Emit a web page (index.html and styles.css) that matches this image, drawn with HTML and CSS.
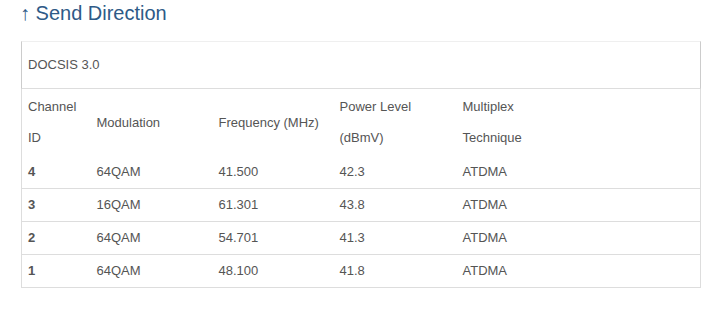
FILE: index.html
```html
<!DOCTYPE html>
<html lang="en">
<head>
<meta charset="utf-8">
<title>Send Direction</title>
<link rel="stylesheet" href="styles.css">
</head>
<body>
<div class="page">
  <h2 class="title"><span class="arrow">↑</span> Send Direction</h2>
  <div class="panel">
    <div class="panel-heading">DOCSIS 3.0</div>
    <table class="grid">
      <colgroup>
        <col class="c1"><col class="c2"><col class="c3"><col class="c4"><col>
      </colgroup>
      <thead>
        <tr>
          <th>Channel ID</th>
          <th>Modulation</th>
          <th>Frequency (MHz)</th>
          <th>Power Level (dBmV)</th>
          <th>Multiplex<br>Technique</th>
        </tr>
      </thead>
      <tbody>
        <tr><td class="id">4</td><td>64QAM</td><td>41.500</td><td>42.3</td><td>ATDMA</td></tr>
        <tr><td class="id">3</td><td>16QAM</td><td>61.301</td><td>43.8</td><td>ATDMA</td></tr>
        <tr><td class="id">2</td><td>64QAM</td><td>54.701</td><td>41.3</td><td>ATDMA</td></tr>
        <tr><td class="id">1</td><td>64QAM</td><td>48.100</td><td>41.8</td><td>ATDMA</td></tr>
      </tbody>
    </table>
  </div>
</div>
</body>
</html>
```
FILE: styles.css
```css
html, body {
  margin: 0;
  padding: 0;
  background: #ffffff;
}
body {
  font-family: "Liberation Sans", Arial, sans-serif;
  color: #555555;
}
.page {
  padding: 1px 24px 0 21px;
}
.title {
  margin: 0 0 16px 0;
  font-size: 20px;
  line-height: 24px;
  font-weight: normal;
  color: #2e5a87;
}
.arrow {
  margin-left: -1px;
}
.panel {
  width: 680px;
  box-sizing: border-box;
}
.panel-heading {
  height: 46px;
  box-sizing: content-box;
  border-top: 1px solid #efefef;
  border-left: 1px solid #cccccc;
  border-right: 1px solid #cccccc;
  border-bottom: 1px solid #dddddd;
  padding: 0 6px;
  font-size: 13px;
  line-height: 46px;
  color: #555555;
}
.grid {
  width: 680px;
  border-collapse: collapse;
  table-layout: fixed;
  font-size: 13px;
  color: #555555;
}
.c1 { width: 69px; }
.c2 { width: 122px; }
.c3 { width: 121px; }
.c4 { width: 123px; }
.grid th {
  text-align: left;
  font-weight: normal;
  vertical-align: middle;
  line-height: 31px;
  padding: 2px 7px 3px 6px;
}
.grid td {
  line-height: 16px;
  padding: 8px 7px 8px 6px;
  border-bottom: 1px solid #dddddd;
}
.grid th:first-child, .grid td:first-child {
  border-left: 1px solid #dddddd;
}
.grid th:last-child, .grid td:last-child {
  border-right: 1px solid #dddddd;
}
.grid td.id {
  font-weight: bold;
}
```
